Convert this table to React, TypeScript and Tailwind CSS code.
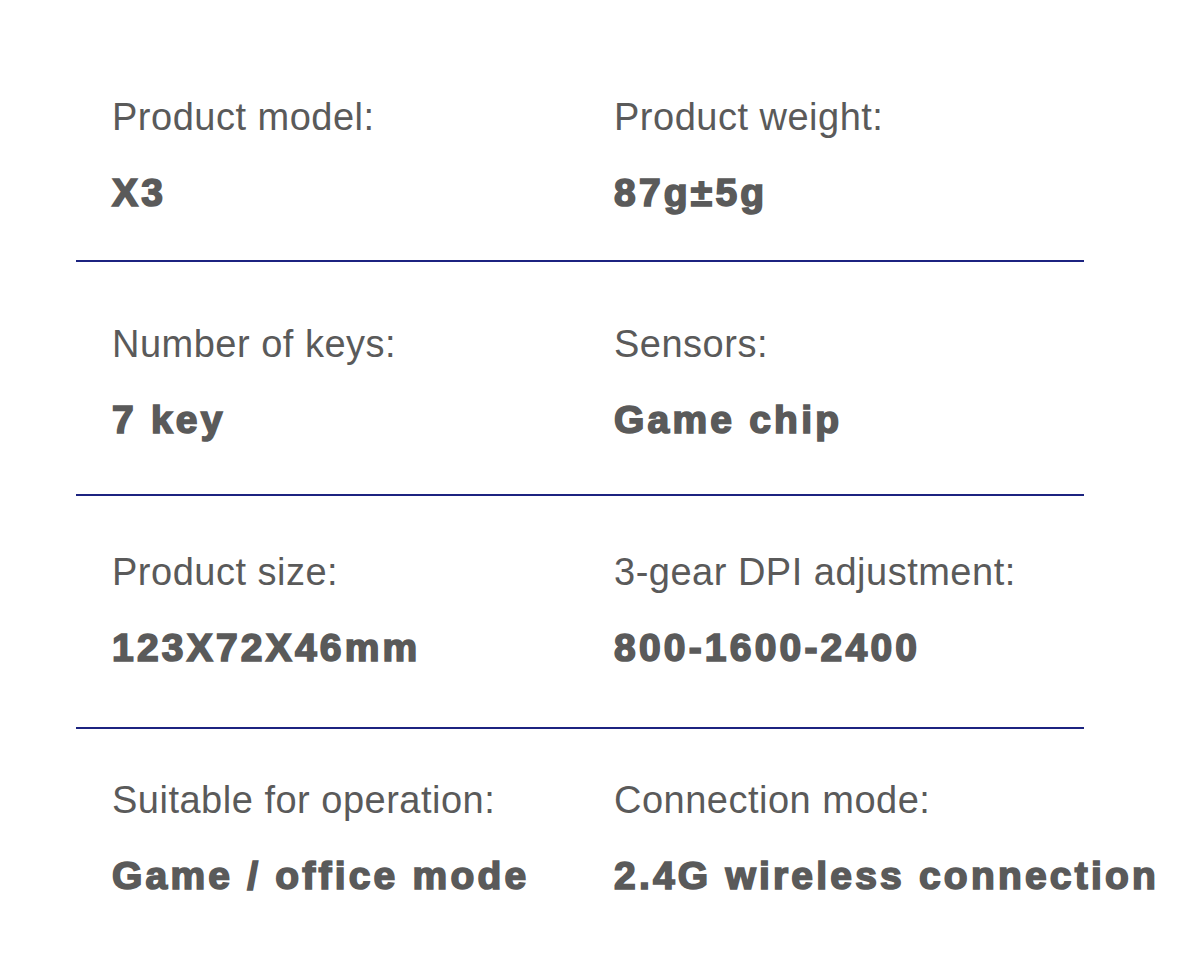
import React from "react";

const rows = [
  [
    { label: "Product model:", value: "X3" },
    { label: "Product weight:", value: "87g±5g" },
  ],
  [
    { label: "Number of keys:", value: "7 key" },
    { label: "Sensors:", value: "Game chip" },
  ],
  [
    { label: "Product size:", value: "123X72X46mm" },
    { label: "3-gear DPI adjustment:", value: "800-1600-2400" },
  ],
  [
    { label: "Suitable for operation:", value: "Game / office mode" },
    { label: "Connection mode:", value: "2.4G wireless connection" },
  ],
];

// spacing around each divider, read off the picture
const dividers = [
  "mt-[47px] mb-[62px]",
  "mt-[54px] mb-[56px]",
  "mt-[59px] mb-[51px]",
];

const Spec = ({ label, value }: { label: string; value: string }) => (
  <div className="flex flex-col">
    <span className="text-[38px] leading-[40px] tracking-[0.5px] text-[#5a5a5a]">
      {label}
    </span>
    <span className="mt-[36px] text-[39px] leading-[40px] font-bold tracking-[3.2px] text-[#5a5a5a] [-webkit-text-stroke:1.7px_#5a5a5a] whitespace-nowrap">
      {value}
    </span>
  </div>
);

const App = () => {
  return (
    <div
      className="w-[1200px] h-[960px] bg-white overflow-hidden"
      style={{ fontFamily: '"Liberation Sans", Arial, sans-serif' }}
    >
      <div className="pt-[97px] pl-[76px] w-[1084px]">
        {rows.map((row, i) => (
          <div key={i}>
            <div className="grid grid-cols-[502px_1fr] pl-[36px]">
              <Spec {...row[0]} />
              <Spec {...row[1]} />
            </div>
            {i < rows.length - 1 && (
              <div className={`${dividers[i]} h-[2px] bg-[#1c2380]`} />
            )}
          </div>
        ))}
      </div>
    </div>
  );
};

export default App;
